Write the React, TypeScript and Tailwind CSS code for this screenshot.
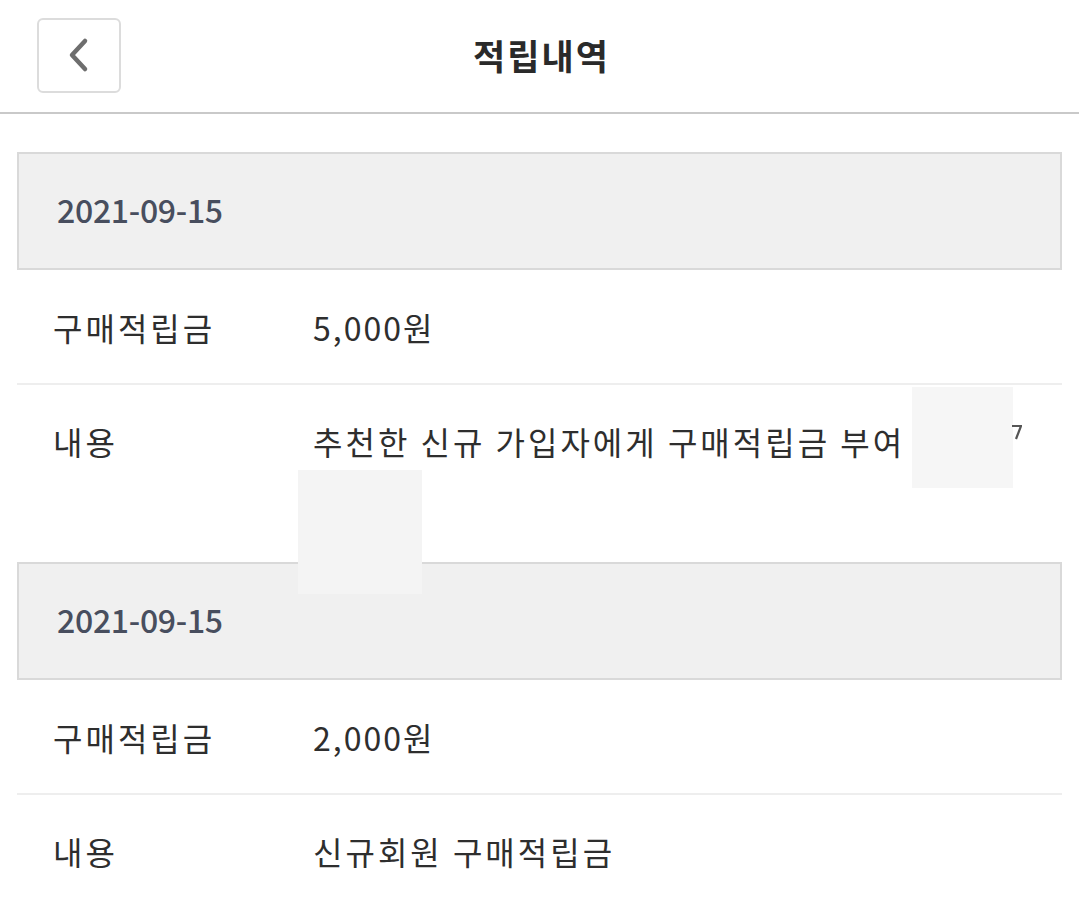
import React from 'react';

const FONT = { fontFamily: '"Noto Sans CJK KR", "Noto Sans", sans-serif' };

interface Entry {
  date: string;
  amount: string;
  memo: string;
}

const entries: Entry[] = [
  { date: '2021-09-15', amount: '5,000원', memo: '추천한 신규 가입자에게 구매적립금 부여' },
  { date: '2021-09-15', amount: '2,000원', memo: '신규회원 구매적립금' },
];

function BackButton() {
  return (
    <button className="w-[84px] h-[75px] rounded-[6px] border-2 border-[#dcdcdc] bg-white flex items-center justify-center">
      <svg width="26" height="36" viewBox="0 0 26 36" fill="none">
        <path d="M19 4 L6 18 L19 32" stroke="#6e6e6e" strokeWidth="4.5" strokeLinecap="round" strokeLinejoin="round" />
      </svg>
    </button>
  );
}

function HistoryItem({ entry, last }: { entry: Entry; last?: boolean }) {
  return (
    <div>
      <div className="h-[118px] bg-[#f0f0f0] border-2 border-[#d9d9d9] flex items-center pl-[38px] pb-[4px]">
        <span className="text-[32px] font-medium text-[#484e5e] tracking-[-0.3px]">{entry.date}</span>
      </div>
      <div className="h-[115px] flex items-center border-b-2 border-[#eeeeee] text-[32px] text-[#2e2e2e] tracking-[3px]">
        <span className="w-[296px] pl-[36px]">구매적립금</span>
        <span className="tracking-[2px]">{entry.amount}</span>
      </div>
      <div className={`flex text-[32px] text-[#2e2e2e] tracking-[3px] pt-[32px] ${last ? 'h-[120px]' : 'h-[177px]'}`}>
        <span className="w-[296px] pl-[36px] shrink-0">내용</span>
        <span>{entry.memo}</span>
      </div>
    </div>
  );
}

export default function App() {
  return (
    <div className="w-[1079px] h-[910px] bg-white overflow-hidden relative" style={FONT}>
      <header className="h-[114px] border-b-2 border-[#c9c9c9] flex items-center relative pl-[37px] pb-[2px]">
        <BackButton />
        <h1 className="absolute left-0 right-0 text-center text-[35px] font-bold text-[#2a2a2a] tracking-[2px] pl-[4px] pointer-events-none">
          적립내역
        </h1>
      </header>

      <div className="mx-[17px] mt-[38px]">
        {entries.map((e, i) => (
          <HistoryItem key={i} entry={e} last={i === entries.length - 1} />
        ))}
      </div>

      {/* redaction patches */}
      <div className="absolute left-[912px] top-[387px] w-[101px] h-[101px] bg-[#f6f6f6]" />
      <svg className="absolute left-[1012px] top-[424px]" width="10" height="16" viewBox="0 0 10 16">
        <path d="M0 2 L9 2 L4 15" stroke="#555" strokeWidth="2.2" fill="none" />
      </svg>
      <div className="absolute left-[298px] top-[470px] w-[124px] h-[124px] bg-[#f4f4f4]" />
    </div>
  );
}
